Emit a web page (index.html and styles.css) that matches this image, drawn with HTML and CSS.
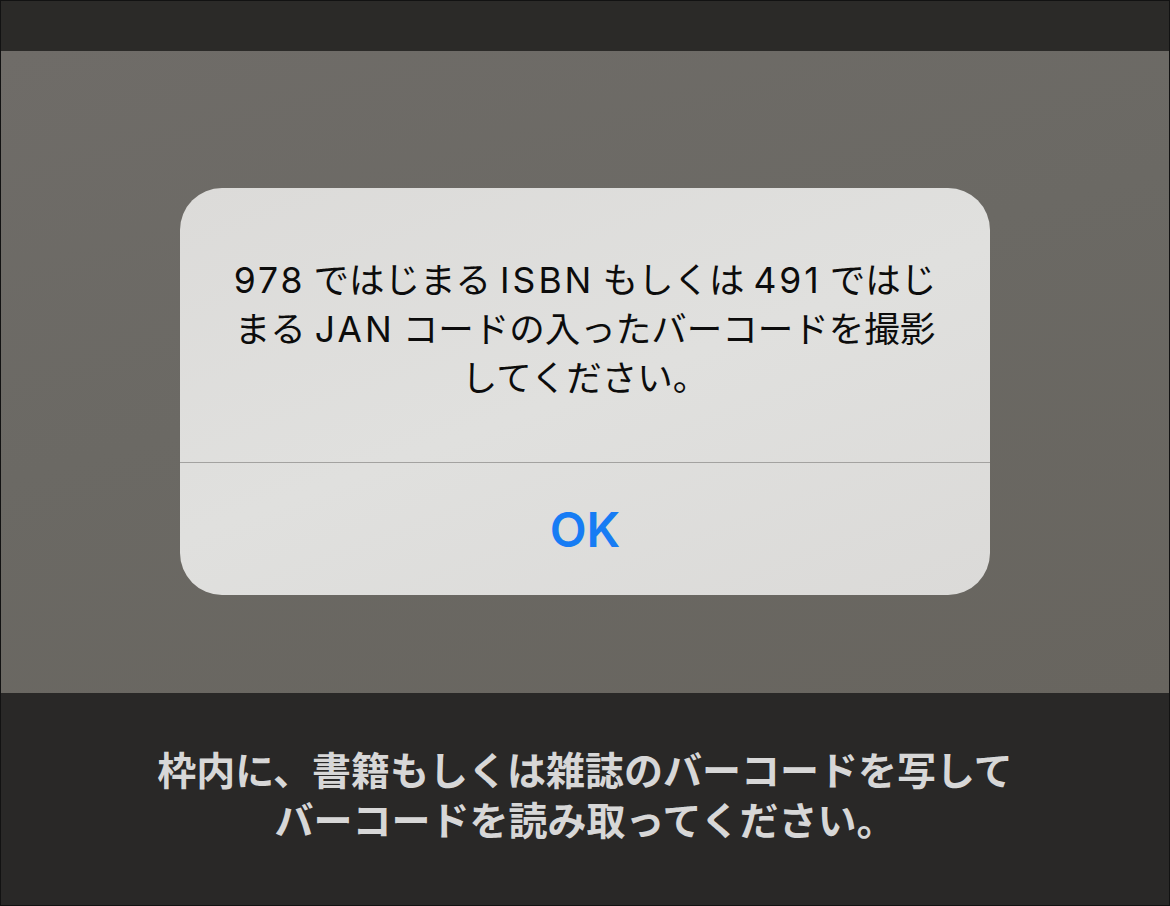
FILE: index.html
```html
<!DOCTYPE html>
<html lang="ja">
<head>
<meta charset="utf-8">
<title>バーコード読み取り</title>
<link rel="stylesheet" href="styles.css">
</head>
<body>
<div class="screen">
  <div class="topbar"></div>
  <div class="camera">
    <div class="alert">
      <div class="message">
        <div class="line"><span class="latin first">978</span>ではじまる<span class="latin">ISBN</span>もしくは<span class="latin">491</span>ではじ</div>
        <div class="line">まる<span class="latin">JAN</span>コードの入ったバーコードを撮影</div>
        <div class="line">してください。</div>
      </div>
      <div class="divider"></div>
      <div class="button">OK</div>
    </div>
  </div>
  <div class="bottombar">
    <div class="hint">
      <div class="hint-line">枠内に、書籍もしくは雑誌のバーコードを写して</div>
      <div class="hint-line">バーコードを読み取ってください。</div>
    </div>
  </div>
</div>
</body>
</html>
```
FILE: styles.css
```css
html, body {
  margin: 0;
  padding: 0;
  background: #111;
}

.screen {
  width: 1170px;
  height: 906px;
  box-sizing: border-box;
  border: 1px solid #121212;
  display: flex;
  flex-direction: column;
  overflow: hidden;
  font-family: Inter, "Noto Sans CJK JP", sans-serif;
}

.topbar {
  height: 50px;
  flex: none;
  background: #2b2a28;
}

.camera {
  height: 642px;
  flex: none;
  background: linear-gradient(165deg, #6f6c68 0%, #6b6964 45%, #68655f 100%);
  display: flex;
  justify-content: center;
  align-items: flex-start;
  padding-top: 137px;
  box-sizing: border-box;
}

.alert {
  width: 810px;
  background: linear-gradient(160deg, #dcdbd9 0%, #e0e0de 50%, #dbdad8 100%);
  border-radius: 42px;
  overflow: hidden;
  display: flex;
  flex-direction: column;
}

.message {
  padding: 68px 10px 59px;
  font-family: Inter, "Noto Sans CJK JP", sans-serif;
  font-size: 35.5px;
  line-height: 49px;
  color: #0c0c0c;
  text-align: center;
}

.line {
  white-space: nowrap;
}

.latin {
  margin: 0 8px 0 9px;
  letter-spacing: 3px;
}

.latin.first {
  margin-left: 0;
}

.divider {
  height: 1px;
  background: #a3a2a0;
}

.button {
  height: 132px;
  display: flex;
  align-items: center;
  justify-content: center;
  font-family: Inter, "Noto Sans", sans-serif;
  font-size: 48px;
  font-weight: 600;
  color: #177cf4;
}

.bottombar {
  flex: 1;
  background: #292827;
  padding-top: 50px;
  box-sizing: border-box;
}

.hint {
  font-family: "Noto Sans CJK JP", sans-serif;
  font-size: 39px;
  font-weight: 700;
  line-height: 50px;
  color: #d7d7d7;
  text-align: center;
}

.hint-line {
  white-space: nowrap;
}
```
